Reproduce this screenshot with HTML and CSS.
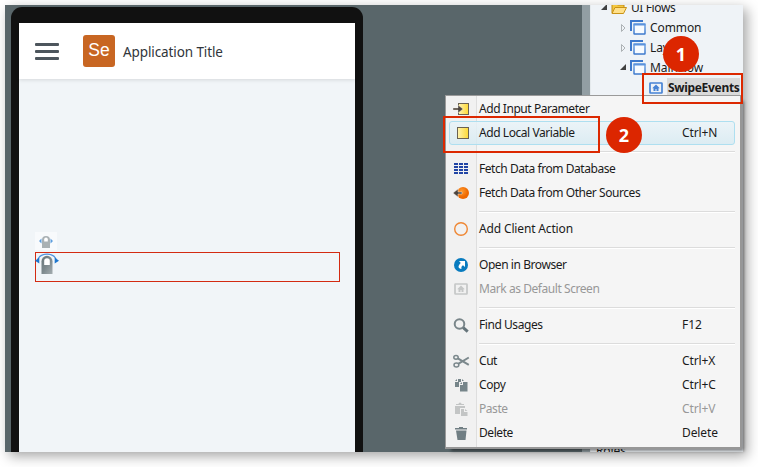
FILE: index.html
```
<!DOCTYPE html>
<html lang="en">
<head>
<meta charset="utf-8">
<title>Service Studio</title>
<link rel="stylesheet" href="styles.css">
</head>
<body>
<svg class="defs" width="0" height="0">
  <defs>
    <linearGradient id="yellow"><stop offset="0" stop-color="#fff3b0"/><stop offset="1" stop-color="#fdd835"/></linearGradient>
    <radialGradient id="orange" cx=".4" cy=".35"><stop offset="0" stop-color="#ff9a2e"/><stop offset="1" stop-color="#ee6800"/></radialGradient>
    <linearGradient id="blue" x2="0" y2="1"><stop offset="0" stop-color="#78a9e6"/><stop offset="1" stop-color="#3c78cc"/></linearGradient>
    <linearGradient id="steel" x2="1" y2="1"><stop offset="0" stop-color="#68767a"/><stop offset=".5" stop-color="#7d898d"/><stop offset="1" stop-color="#a5adb0"/></linearGradient>
    <symbol id="flow" viewBox="0 0 16 16"><path d="M1 11V1h12" fill="none" stroke="#3c78cc" stroke-width="2"/><rect x="4" y="4" width="11" height="10" rx=".5" fill="#f7fbff" stroke="url(#blue)" stroke-width="1.5"/><path d="M3.5 4.5h12" stroke="#5b92dc" stroke-width="2"/></symbol>
    <symbol id="home" viewBox="0 0 14 12"><rect x="1" y="1" width="12" height="10" rx=".5" fill="none" stroke="currentColor" stroke-width="1.700"/><path d="M7 2.500 3.200 6.300H4.500V9h2V7h1v2h2V6.300h1.300z" fill="currentColor"/></symbol>
  </defs>
</svg>
<div class="app">
  <main class="canvas">
    <div class="phone">
      <div class="screen">
        <header class="bar">
          <div class="burger"><i></i><i></i><i></i></div>
          <div class="logo"><span>Se</span></div>
          <span class="title">Application Title</span>
        </header>
        <div class="tag"><svg width="14" height="14" viewBox="0 0 14 14"><path d="M2.500 4.500v5L0 7zM11.500 4.500v5L14 7z" fill="#5c9ddd"/><path d="M3 14V6a4 4 0 0 1 8 0v8z" fill="#a9b1b4"/><path d="M5.200 7.500V5.300a1.800 1.800 0 0 1 3.600 0v2.200z" fill="#fff"/></svg></div>
        <div class="widget"><svg width="24" height="22" viewBox="0 0 24 22"><path d="M3 6C6-.6 18-.6 21 6" fill="none" stroke="#4f91dc" stroke-width="1.300"/><path d="M4.300 4.500v6L0 7.700zM19.700 4.500v6L24 7.700z" fill="#1d76ce"/><path d="M6.500 21V8.300a5.500 5.500 0 0 1 11 0V21z" fill="url(#steel)"/><path d="M9.200 12V8a2.800 2.800 0 0 1 5.600 0v4z" fill="#fff"/></svg></div>
      </div>
    </div>
  </main>
  <div class="splitter"></div>
  <aside class="tree">
    <div class="node root"><svg class="arrow" width="8" height="8"><path d="M6 0v6H0z" fill="#404040"/></svg><svg class="ic" width="16" height="14" viewBox="0 0 16 14"><path d="M1 12V2h4l1.500 2H13v3" fill="#f5c83e" stroke="#c18c16"/><path d="M1 12.500 4 6.500h11.500l-3 6z" fill="#ffe08a" stroke="#c99318"/></svg><span>UI Flows</span></div>
    <div class="node sub"><svg class="arrow" width="8" height="8"><path d="M1.500.5v7L5 4z" fill="none" stroke="#adb2b5"/></svg><svg class="ic" width="16" height="16"><use href="#flow"/></svg><span>Common</span></div>
    <div class="node sub"><svg class="arrow" width="8" height="8"><path d="M1.500.5v7L5 4z" fill="none" stroke="#adb2b5"/></svg><svg class="ic" width="16" height="16"><use href="#flow"/></svg><span>Layouts</span></div>
    <div class="node sub"><svg class="arrow" width="8" height="8"><path d="M6 0v6H0z" fill="#404040"/></svg><svg class="ic" width="16" height="16"><use href="#flow"/></svg><span>MainFlow</span></div>
    <div class="node leaf"><svg class="ic blue" width="14" height="12"><use href="#home"/></svg><b>SwipeEvents</b></div>
    <div class="roles">Roles</div>
  </aside>
</div>

<div class="menu">
  <div class="item"><svg width="18" height="16" viewBox="0 0 18 16"><rect x="5.500" y="2.500" width="10" height="11" fill="url(#yellow)" stroke="#6b6152"/><path d="M0 7h5V4l5 4-5 4V9H0z" fill="#4c443e" stroke="#f7f3e4" stroke-width=".4"/></svg><span>Add Input Parameter</span></div>
  <div class="item hot"><svg width="18" height="16" viewBox="0 0 18 16"><rect x="4.500" y="2.500" width="11" height="11" fill="url(#yellow)" stroke="#6b6152"/></svg><span>Add Local Variable</span><kbd>Ctrl+N</kbd></div>
  <hr>
  <div class="item"><svg width="18" height="16" viewBox="0 0 18 16"><path d="M1 3h14M1 6h14M1 9h14M1 12h14" stroke="#2145a5" stroke-width="2" stroke-dasharray="4 1"/></svg><span>Fetch Data from Database</span></div>
  <div class="item"><svg width="18" height="16" viewBox="0 0 18 16"><circle cx="10" cy="8" r="6" fill="url(#orange)"/><path d="M9 7H5V4L0 8l5 4V9h4z" fill="#4c443e" stroke="#f2ede8" stroke-width=".5"/></svg><span>Fetch Data from Other Sources</span></div>
  <hr>
  <div class="item"><svg width="18" height="16" viewBox="0 0 18 16"><circle cx="8" cy="8" r="6.300" fill="#f1f1f1" stroke="#ef8734" stroke-width="1.400"/></svg><span class="wide">Add Client Action</span></div>
  <hr>
  <div class="item"><svg width="18" height="16" viewBox="0 0 18 16"><circle cx="8" cy="8" r="7" fill="#087bbf"/><path d="M6 4h6v6l-2-1.700C8.300 9.400 8.200 10.500 8.500 12 5 11.500 4.500 9 7.800 6z" fill="#fff"/></svg><span>Open in Browser</span></div>
  <div class="item off"><svg width="18" height="16" viewBox="0 0 18 16"><use href="#home" x="1" y="2" width="14" height="12"/></svg><span>Mark as Default Screen</span></div>
  <hr>
  <div class="item"><svg width="18" height="16" viewBox="0 0 18 16"><circle cx="6.500" cy="7" r="4.800" fill="none" stroke="#7a868a" stroke-width="2"/><path d="m10.200 10.700 4.500 4" stroke="#65747a" stroke-width="3"/></svg><span>Find Usages</span><kbd>F12</kbd></div>
  <hr>
  <div class="item"><svg width="18" height="16" viewBox="0 0 18 16"><g fill="none" stroke="#7b888c" stroke-width="1.500"><ellipse cx="3" cy="4.300" rx="2.200" ry="1.900"/><ellipse cx="3.400" cy="12" rx="2.400" ry="2"/><path d="m4.800 5.400 11 6.500M5.200 10.800 15.800 4.500" stroke-width="2"/></g></svg><span>Cut</span><kbd>Ctrl+X</kbd></div>
  <div class="item"><svg width="18" height="16" viewBox="0 0 18 16"><path d="M5 2h3v3H6v5H2V5h3zM9 2l2 2H9zM2 4l2-2v2z" fill="#76858a"/><path d="M10 5v3H7v6.500h7.500V5zM7 7l2-2v2z" fill="#76858a"/></svg><span>Copy</span><kbd>Ctrl+C</kbd></div>
  <div class="item off"><svg width="18" height="16" viewBox="0 0 18 16"><path d="M2 5h10v2H7v6H2zM3 3h2.500a1.500 1.500 0 0 1 3 0H11v1H3zM8 8h3v3h3.500v4H8zM12 8l2.500 2H12z" fill="#c3c5c5"/></svg><span>Paste</span><kbd>Ctrl+V</kbd></div>
  <div class="item"><svg width="18" height="16" viewBox="0 0 18 16"><path d="M2 3h4V2h4v1h4v1.500H2zM3 5.500h10.500L12.500 15h-8z" fill="#707e83"/></svg><span>Delete</span><kbd>Delete</kbd></div>
</div>

<div class="frame one"></div>
<div class="frame two"></div>
<div class="badge b1">1</div>
<div class="badge b2">2</div>
</body>
</html>
```
FILE: styles.css
```
* { box-sizing: border-box; }
body { margin: 0; width: 758px; height: 467px; padding: 5px; overflow: hidden; background: #fff; font: 12px/20px "Noto Sans", "Open Sans", sans-serif; color: #1b1b1b; }
.defs { position: absolute; }
.app { display: flex; width: 738px; height: 447px; background: #59666a; box-shadow: 4px 4px 12px rgba(0,0,0,.36); }
.canvas { width: 577px; padding: 2px 0 0 6px; overflow: hidden; }
.phone { width: 352px; height: 445px; padding: 16px 8px 0; background: #111; border-radius: 11px 11px 0 0; }
.screen { height: 429px; background: #f1f5f8; }
.bar { display: flex; align-items: center; height: 56px; padding-left: 16px; background: #fff; box-shadow: 0 1px 4px rgba(0,0,0,.12); }
.burger { display: grid; gap: 4px; width: 24px; }
.burger i { height: 3px; border-radius: 1px; background: #4d565d; }
.logo { display: flex; align-items: center; justify-content: center; width: 32px; height: 32px; margin: 0 8px 0 24px; border-radius: 3px; background: #c86622; color: #fff; font: 17.5px "Liberation Sans", sans-serif; }
.logo span { margin-top: -2px; }
.title { color: #30353a; font-size: 13.5px; letter-spacing: -.1px; padding-top: 1px; }
.tag { display: flex; justify-content: center; align-items: center; width: 22px; height: 18px; margin: 153px 0 2px 16px; background: #f8fafc; }
.widget { width: 305px; height: 30px; margin-left: 16px; border: 1px solid #d32b12; }
.widget svg { display: block; margin-left: -1px; }
.splitter { width: 9px; background: #929ea3; border-right: 1px solid #e5eaed; }
.tree { flex: 1; display: flex; flex-direction: column; overflow: hidden; background: #eff3f7; letter-spacing: -.1px; }
.node { display: flex; flex: none; align-items: center; height: 20px; white-space: nowrap; }
.root { margin-top: -7px; padding-left: 10px; }
.root span { letter-spacing: -.4px; }
.sub { padding-left: 29px; }
.arrow { margin-right: 2px; flex: none; }
.ic { margin-right: 4px; flex: none; }
.blue { color: #4783d5; margin-right: 4px; }
.leaf { padding-left: 58px; }
.leaf b { height: 20px; padding: 0 1px; background: #d9d9d9; font-size: 12px; letter-spacing: -.32px; }
.roles { margin: auto 0 -9px 5px; }
.menu { position: absolute; left: 445px; top: 95px; width: 297px; height: 354px; padding: 1px 5px 0 0; border: 1px solid #9a9a9a; border-right: 2px solid #979797; border-bottom: 2px solid #979797; background: linear-gradient(90deg, #f1f1f1 30px, #dedede 30px, #dedede 31px, #f5f5f5 31px); box-shadow: 4px 4px 3px -2px rgba(0,0,0,.45); }
.item { display: flex; align-items: center; height: 24px; padding: 0 4px 0 7px; white-space: nowrap; }
.item svg { flex: none; width: 18px; margin: 0 8px 0 0; color: #c5c7c7; }
.item span, .item kbd { line-height: 24px; height: 24px; }
.item span { flex: 1; letter-spacing: -.44px; }
.item .wide { letter-spacing: -.15px; }
.item kbd { width: 49px; font-family: inherit; font-size: 12px; letter-spacing: -.1px; }
.hot { margin-left: 3px; padding: 0 3px 0 3px; border: 1px solid #aedff0; border-radius: 3px; background: linear-gradient(rgba(233,243,248,.8), rgba(214,234,242,.8)); }
.off { color: #989898; }
.menu hr { height: 1px; margin: 6px 0 5px 33px; border: 0; background: #dcdcdc; box-shadow: 0 1px #fff; }
.frame { position: absolute; border: 2px solid #dc2800; }
.one { left: 642px; top: 73px; width: 101px; height: 31px; }
.two { left: 443px; top: 116px; width: 157px; height: 37px; }
.badge { position: absolute; width: 36px; height: 36px; border-radius: 50%; background: #dc2600; color: #fff; font: bold 18px/36px "Open Sans", sans-serif; text-align: center; }
.b1 { left: 663px; top: 36px; }
.b2 { left: 606px; top: 117px; }
```
